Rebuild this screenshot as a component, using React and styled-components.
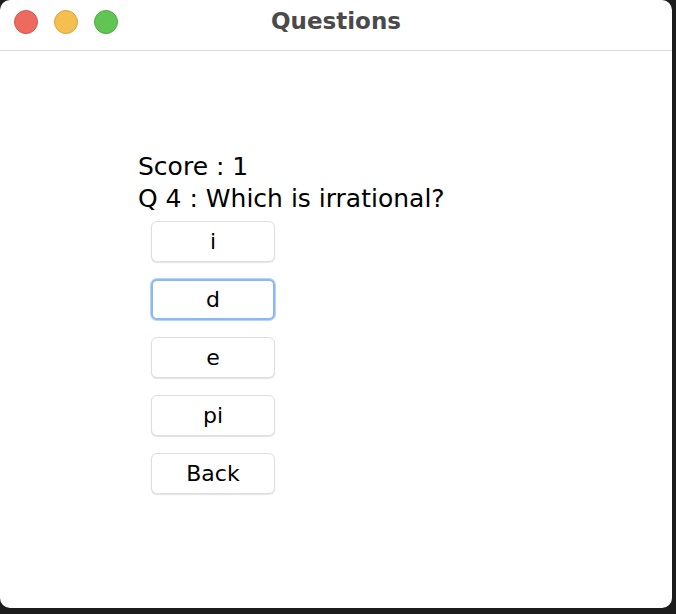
import React from 'react'
import styled, { createGlobalStyle } from 'styled-components'

const GlobalStyle = createGlobalStyle`
  html, body {
    margin: 0;
    padding: 0;
    background: #1c1c1c;
  }
  body {
    width: 676px;
    height: 614px;
    overflow: hidden;
  }
`

const answers = ['i', 'd', 'e', 'pi']

function App() {
  return (
    <>
      <GlobalStyle />
      <Window>
        <TitleBar>
          <Lights>
            <Light color="#ee6a5f" edge="#d4574c" />
            <Light color="#f5bf4f" edge="#d9a33e" />
            <Light color="#61c554" edge="#4fa93f" />
          </Lights>
          <Title>Questions</Title>
        </TitleBar>
        <Content>
          <Line>Score : 1</Line>
          <Line>Q 4 : Which is irrational?</Line>
          <Buttons>
            {answers.map((a) => (
              <Answer key={a} focused={a === 'd'}>{a}</Answer>
            ))}
            <Answer>Back</Answer>
          </Buttons>
        </Content>
      </Window>
    </>
  )
}

export default App

const Window = styled.div`
  width: 672px;
  height: 608px;
  background: #ffffff;
  border-radius: 10px;
  overflow: hidden;
  display: flex;
  flex-direction: column;
`

const TitleBar = styled.div`
  height: 50px;
  border-bottom: 1px solid #dcdcdc;
  position: relative;
  display: flex;
  align-items: center;
  justify-content: center;
`

const Lights = styled.div`
  position: absolute;
  left: 14px;
  top: 10px;
  display: flex;
  gap: 16px;
`

const Light = styled.span`
  width: 22px;
  height: 22px;
  border-radius: 50%;
  background: ${(p) => p.color};
  border: 1px solid ${(p) => p.edge};
`

const Title = styled.div`
  font-family: "DejaVu Sans", sans-serif;
  font-weight: bold;
  font-size: 23px;
  color: #4a4a4a;
  margin-top: -8px;
`

const Content = styled.div`
  padding: 100px 0 0 138px;
  display: flex;
  flex-direction: column;
  font-family: "DejaVu Sans", sans-serif;
  color: #000;
`

const Line = styled.div`
  font-size: 25px;
  line-height: 32px;
`

const Buttons = styled.div`
  margin: 6px 0 0 13px;
  display: flex;
  flex-direction: column;
  gap: 17px;
`

const Answer = styled.button`
  width: 124px;
  height: 41px;
  box-sizing: border-box;
  background: #ffffff;
  border: ${(p) => (p.focused ? '2px solid #8ab8f2' : '1px solid #dedede')};
  border-radius: 6px;
  box-shadow: ${(p) => (p.focused ? '0 0 0 1px #b9d4f7' : '0 1px 1px rgba(0,0,0,0.12)')};
  font-family: "DejaVu Sans", sans-serif;
  font-size: 22px;
  color: #000;
  padding: 0;
  display: flex;
  align-items: center;
  justify-content: center;
`
